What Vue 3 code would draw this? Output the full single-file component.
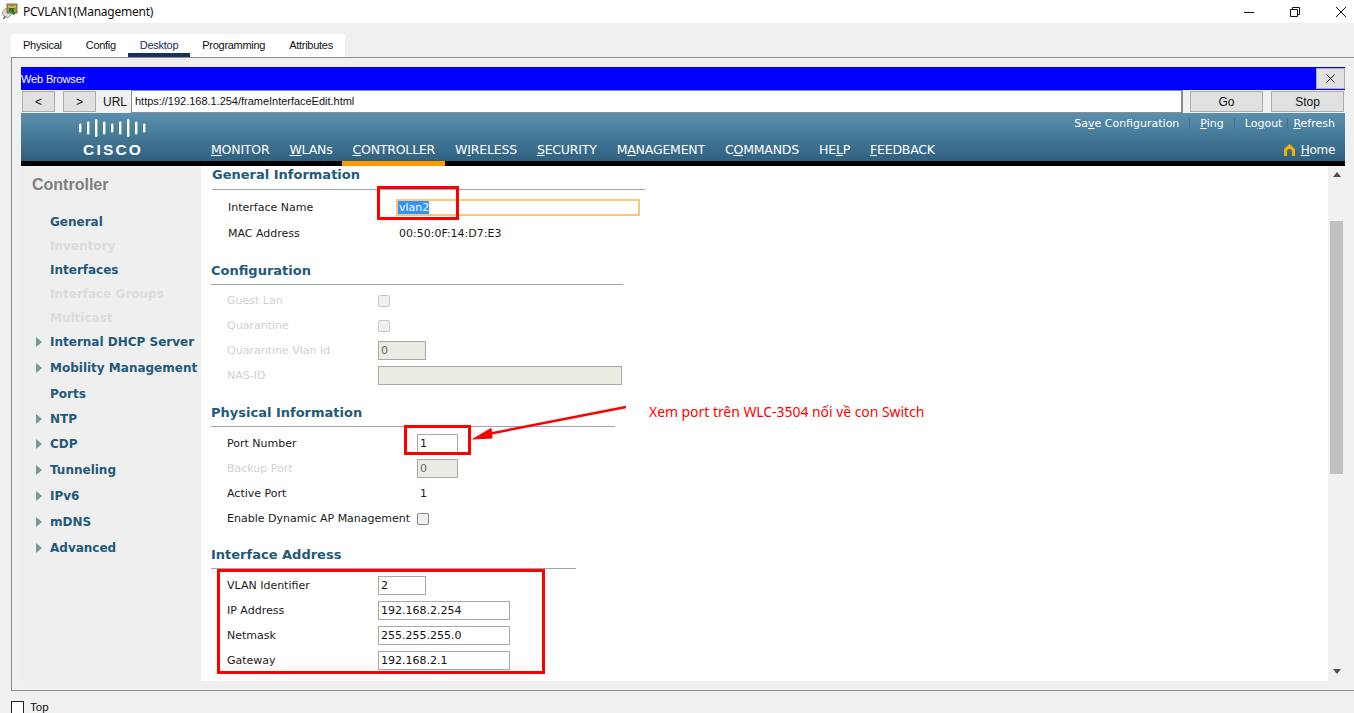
<script setup>
const tabs = ['Physical', 'Config', 'Desktop', 'Programming', 'Attributes']
const nav = [
  ['', 'M', 'ONITOR'], ['', 'W', 'LANs'], ['', 'C', 'ONTROLLER'], ['W', 'I', 'RELESS'],
  ['', 'S', 'ECURITY'], ['M', 'A', 'NAGEMENT'], ['C', 'O', 'MMANDS'], ['HE', 'L', 'P'], ['', 'F', 'EEDBACK']
]
const side = [
  { t: 'General', h: 24 },
  { t: 'Inventory', h: 24, off: true },
  { t: 'Interfaces', h: 24 },
  { t: 'Interface Groups', h: 24, off: true },
  { t: 'Multicast', h: 24, off: true },
  { t: 'Internal DHCP Server', h: 24, arrow: true },
  { t: 'Mobility Management', h: 28, arrow: true },
  { t: 'Ports', h: 24 },
  { t: 'NTP', h: 25, arrow: true },
  { t: 'CDP', h: 26, arrow: true },
  { t: 'Tunneling', h: 26, arrow: true },
  { t: 'IPv6', h: 26, arrow: true },
  { t: 'mDNS', h: 26, arrow: true },
  { t: 'Advanced', h: 26, arrow: true }
]
const bars = [
  [79, 9], [87, 13], [95, 18], [103, 13], [111, 9], [119, 13], [127, 18], [135, 13], [143, 9]
]
const sections = [
  {
    key: 'general', title: 'General Information',
    rows: [
      { label: 'Interface Name', kind: 'focus', value: 'vlan2' },
      { label: 'MAC Address', kind: 'text', value: '00:50:0F:14:D7:E3' }
    ]
  },
  {
    key: 'config', title: 'Configuration',
    rows: [
      { label: 'Guest Lan', kind: 'check', off: true },
      { label: 'Quarantine', kind: 'check', off: true },
      { label: 'Quarantine Vlan Id', kind: 'input', off: true, value: '0', w: 'w48' },
      { label: 'NAS-ID', kind: 'input', off: true, value: '', w: 'w244' }
    ]
  },
  {
    key: 'physical', title: 'Physical Information',
    rows: [
      { label: 'Port Number', kind: 'input', value: '1', w: 'w41' },
      { label: 'Backup Port', kind: 'input', off: true, value: '0', w: 'w41' },
      { label: 'Active Port', kind: 'text', value: '1' },
      { label: 'Enable Dynamic AP Management', kind: 'check' }
    ]
  },
  {
    key: 'address', title: 'Interface Address',
    rows: [
      { label: 'VLAN Identifier', kind: 'input', value: '2', w: 'w48' },
      { label: 'IP Address', kind: 'input', value: '192.168.2.254', w: 'w132' },
      { label: 'Netmask', kind: 'input', value: '255.255.255.0', w: 'w132' },
      { label: 'Gateway', kind: 'input', value: '192.168.2.1', w: 'w132' }
    ]
  }
]
</script>

<template>
  <div class="app">
    <header class="titlebar">
      <svg class="appicon" width="16" height="17" viewBox="0 0 16 17">
        <ellipse cx="5" cy="10" rx="4.5" ry="4.5" fill="#d8dcd8" stroke="#9aa09a" />
        <rect x="5" y="1" width="10" height="9" fill="#b8923c" stroke="#6f5a20" stroke-width="0.8" />
        <path d="M6 3l4 2 4-2" fill="none" stroke="#e8d48a" />
        <path d="M7 5l6 0-1.5 2 2 4-2.5 1-2-4-2 1.5z" fill="#1e7a33" />
        <path d="M3 13l-1.5 3" stroke="#555" stroke-width="1.4" />
      </svg>
      <span class="wintitle">PCVLAN1(Management)</span>
      <div class="winctl">
        <svg width="12" height="12" viewBox="0 0 12 12"><path d="M1 6.5h10" stroke="#111" fill="none" /></svg>
        <svg width="12" height="12" viewBox="0 0 12 12"><path d="M1.5 3.5h7v7h-7zM3.5 3.5v-2h7v7h-2" stroke="#111" fill="none" /></svg>
        <svg width="12" height="12" viewBox="0 0 12 12"><path d="M1 1l10 10M11 1L1 11" stroke="#111" fill="none" /></svg>
      </div>
    </header>

    <nav class="tabs">
      <span v-for="t in tabs" :key="t" class="tab" :class="{ active: t === 'Desktop' }">{{ t }}</span>
    </nav>

    <section class="panel">
      <div class="bluebar">
        <span>Web Browser</span>
        <button class="btn closebtn">
          <svg width="11" height="11" viewBox="0 0 11 11"><path d="M1.5 1.5l8 8M9.5 1.5l-8 8" stroke="#111" fill="none" /></svg>
        </button>
      </div>
      <div class="urlrow">
        <button class="btn navbtn">&lt;</button>
        <button class="btn navbtn second">&gt;</button>
        <span class="urllabel">URL</span>
        <div class="urlinput">https://192.168.1.254/frameInterfaceEdit.html</div>
        <button class="btn gobtn">Go</button>
        <button class="btn gobtn">Stop</button>
      </div>

      <div class="hdr">
        <div class="logo">
          <svg class="bars" width="70" height="22" viewBox="76 117 70 22">
            <rect v-for="b in bars" :key="b[0]" :x="b[0]" :y="128 - b[1] / 2" width="2.4" :height="b[1]" rx="1.2" fill="#fff" />
          </svg>
          <span class="cisco">CISCO</span>
        </div>
        <div class="hdrmain">
          <div class="toplinks">
            <span>Sa<u>v</u>e Configuration</span><i class="sep"></i>
            <span><u>P</u>ing</span><i class="sep"></i>
            <span>Lo<u>g</u>out</span><i class="sep near"></i>
            <span><u>R</u>efresh</span>
          </div>
          <div class="navrow">
            <div class="navitems">
              <span v-for="n in nav" :key="n[1] + n[2]" class="navitem" :class="{ current: n[2] === 'ONTROLLER' }">{{ n[0] }}<u>{{ n[1] }}</u>{{ n[2] }}</span>
            </div>
            <div class="home">
              <svg width="11" height="12" viewBox="0 0 11 12"><path d="M5.5 0L11 5v7H8V7.5a2.5 2.5 0 0 0-5 0V12H0V5z" fill="#f0b400" /></svg>
              <span><u>H</u>ome</span>
            </div>
          </div>
        </div>
      </div>

      <div class="body">
        <aside class="sidebar">
          <h2 class="sidetitle">Controller</h2>
          <div
            v-for="s in side" :key="s.t" class="sideitem" :class="{ off: s.off }"
            :style="{ height: s.h + 'px' }"
          >
            <i v-if="s.arrow" class="tri"></i>{{ s.t }}
          </div>
        </aside>

        <main class="content">
          <div v-for="sec in sections" :key="sec.key" class="sec" :class="sec.key">
            <h3 class="sechead">{{ sec.title }}</h3>
            <div class="rows">
              <div v-for="r in sec.rows" :key="r.label" class="row" :class="{ off: r.off }">
                <span class="label">{{ r.label }}</span>
                <span v-if="r.kind === 'text'" class="valtext">{{ r.value }}</span>
                <div v-else-if="r.kind === 'focus'" class="focus"><span class="sel">{{ r.value }}</span></div>
                <i v-else-if="r.kind === 'check'" class="check"></i>
                <div v-else class="input" :class="r.w">{{ r.value }}</div>
              </div>
            </div>
          </div>
        </main>

        <div class="scrollbar">
          <i class="up"></i>
          <div class="thumb"></div>
          <i class="down"></i>
        </div>
      </div>
    </section>

    <footer class="foot">
      <i class="footcheck"></i>
      <span>Top</span>
    </footer>

    <div class="redbox box1"></div>
    <div class="redbox box2"></div>
    <div class="redbox box3"></div>
    <svg class="arrow" width="170" height="50" viewBox="465 400 170 50">
      <path d="M626 407L488 434" stroke="#f00" stroke-width="2.4" fill="none" />
      <path d="M473 439L491 428.5L492 438z" fill="#f00" stroke="#f00" />
    </svg>
    <div class="note">Xem port trên WLC-3504 nối về con Switch</div>
  </div>
</template>

<style scoped>
.app {
  position: relative;
  width: 1354px;
  height: 713px;
  overflow: hidden;
  background: #f0f0f0;
  display: flex;
  flex-direction: column;
  font-family: "Noto Sans", "Liberation Sans", sans-serif;
  color: #111;
}
i { display: block; font-style: normal; }

.titlebar {
  height: 23px;
  background: #fff;
  display: flex;
  align-items: center;
  position: relative;
  flex: none;
}
.appicon { margin-left: 2px; flex: none; }
.wintitle { margin-left: 5px; font-size: 12px; line-height: 23px; letter-spacing: -0.25px; }
.winctl {
  margin-left: auto;
  display: flex;
  gap: 34px;
  padding-right: 7px;
}

.tabs {
  flex: none;
  margin: 11px 0 0 11px;
  width: 334px;
  height: 23px;
  background: #fff;
  display: flex;
}
.tab {
  padding: 0 12px;
  font-family: "Liberation Sans", sans-serif;
  font-size: 11px;
  letter-spacing: -0.28px;
  line-height: 23px;
  box-sizing: border-box;
  height: 23px;
}
.tab.active { border-bottom: 4px solid #14315c; color: #14315c; }

.panel {
  flex: none;
  box-sizing: border-box;
  height: 634px;
  margin-left: 11px;
  border: 1px solid #8a8f96;
  border-right: 0;
  padding: 9px 9px 0;
  font-family: "Liberation Sans", sans-serif;
}
.bluebar {
  height: 23px;
  background: #00f;
  color: #fff;
  font-size: 11px;
  letter-spacing: -0.15px;
  display: flex;
  align-items: center;
  justify-content: space-between;
}
.btn {
  box-sizing: border-box;
  border: 1px solid #adadad;
  background: #e1e1e1;
  padding: 0;
  font: 12px "Liberation Sans", sans-serif;
  color: #111;
  display: flex;
  align-items: center;
  justify-content: center;
}
.closebtn { width: 29px; height: 21px; }
.urlrow {
  height: 23px;
  display: flex;
  align-items: center;
}
.navbtn { width: 33px; height: 21px; margin-left: 1px; }
.navbtn.second { margin-left: 8px; }
.urllabel { font-size: 12px; margin-left: 7px; width: 28px; }
.urlinput {
  flex: none;
  box-sizing: border-box;
  width: 1052px;
  height: 23px;
  background: #fff;
  border: 1px solid #8a8a8a;
  border-right-width: 2px;
  padding-left: 3px;
  font-size: 11px;
  letter-spacing: -0.02px;
  line-height: 21px;
}
.gobtn { width: 73px; height: 21px; margin-left: 7px; }
.gobtn:last-child { margin-left: 8px; }

.hdr {
  height: 53px;
  box-sizing: border-box;
  border-bottom: 5px solid #000;
  background: linear-gradient(#5a90ae, #2f6080);
  display: flex;
  color: #fff;
}
.logo {
  flex: none;
  width: 190px;
  box-sizing: border-box;
  padding: 4px 0 0 55px;
}
.bars { display: block; }
.cisco {
  display: block;
  margin: 2px 0 0 7px;
  font: 700 15.5px/17px "Liberation Sans", sans-serif;
  letter-spacing: 2.2px;
}
.hdrmain { flex: 1; display: flex; flex-direction: column; }
.toplinks {
  height: 20px;
  display: flex;
  align-items: center;
  justify-content: flex-end;
  padding-right: 10px;
  font: 11px "DejaVu Sans", sans-serif;
}
.sep { width: 1px; height: 11px; background: #4d6f88; margin: 0 10px; }
.sep.near { margin: 0 5px; }
.navrow {
  height: 28px;
  box-sizing: border-box;
  padding-top: 6px;
  display: flex;
  justify-content: space-between;
  align-items: center;
}
.navitems { display: flex; gap: 20px; font: 12.5px/22px "DejaVu Sans", sans-serif; letter-spacing: -0.2px; }
.navitem { position: relative; }
.navitem.current::after {
  content: "";
  position: absolute;
  left: -10px;
  right: -10px;
  top: 22px;
  height: 5px;
  background: #f90;
}
.home {
  display: flex;
  align-items: center;
  gap: 6px;
  padding-right: 10px;
  font: 12px "DejaVu Sans", sans-serif;
  letter-spacing: -0.3px;
}

.body { height: 515px; display: flex; background: #fff; }
.sidebar {
  flex: none;
  width: 180px;
  background: #efefef;
  box-sizing: border-box;
}
.sidetitle {
  margin: 0;
  height: 44px;
  padding: 10px 0 0 11px;
  box-sizing: border-box;
  font: 700 16px/18px "Liberation Sans", sans-serif;
  color: #7f7f80;
}
.sideitem {
  position: relative;
  padding-left: 29px;
  display: flex;
  align-items: center;
  font: 700 12px "DejaVu Sans", sans-serif;
  color: #1f5a7a;
  white-space: nowrap;
}
.sideitem.off { color: #dcdcdc; }
.tri {
  position: absolute;
  left: 15px;
  width: 0;
  height: 0;
  border-left: 6px solid #6f9c9c;
  border-top: 5.5px solid transparent;
  border-bottom: 5.5px solid transparent;
}

.content { flex: 1; min-width: 0; overflow: hidden; padding-left: 10px; font: 11px "DejaVu Sans", sans-serif; }
.sec { margin-top: 14px; }
.sechead {
  margin: 0;
  padding: 1px 0 3px;
  border-bottom: 1px solid #9aa3b8;
  font: 700 13px/20px "DejaVu Sans", sans-serif;
  color: #1f5a7a;
}
.rows { padding: 4px 0 0 16px; }
.row { height: 25px; display: flex; align-items: center; color: #1a1a1a; }
.row.off { color: #d0d0d0; }
.label { flex: none; white-space: nowrap; }
.general { margin: -2px 0 0 1px; width: 433px; }
.general .sechead { padding-bottom: 4px; }
.general .row { height: 26px; }
.general .label { width: 168px; }
.config { width: 412px; }
.config .rows { padding-top: 3px; }
.config .label, .address .label { width: 151px; }
.physical { width: 404px; }
.physical .label { width: 190px; }
.address { width: 365px; margin-top: 13px; }
.valtext { padding-left: 3px; }
.focus {
  box-sizing: border-box;
  width: 244px;
  height: 17px;
  border: 2px solid #f5c87a;
  padding-left: 0;
  line-height: 13px;
  display: flex;
  align-items: center;
}
.sel { background: #3390ff; color: #fff; padding: 0 0 0 1px; }
.input {
  box-sizing: border-box;
  height: 19px;
  border: 1px solid #a9a9a9;
  background: #fff;
  padding-left: 2px;
  line-height: 17px;
  color: #111;
}
.off .input { background: #ebebe4; color: #666; }
.w41 { width: 41px; }
.w48 { width: 48px; }
.w132 { width: 132px; }
.w244 { width: 244px; }
.check {
  box-sizing: border-box;
  width: 12px;
  height: 12px;
  border: 1px solid #8a8a8a;
  border-radius: 2px;
  background: #f0f0f0;
}
.off .check { border-color: #c8c8c8; }

.scrollbar {
  flex: none;
  width: 17px;
  background: #f0f0f0;
  display: flex;
  flex-direction: column;
  align-items: center;
  position: relative;
}
.up, .down {
  position: absolute;
  width: 0;
  height: 0;
  border-left: 4px solid transparent;
  border-right: 4px solid transparent;
}
.up { top: 6px; border-bottom: 5px solid #505050; }
.down { bottom: 7px; border-top: 5px solid #505050; }
.thumb { margin-top: 55px; width: 13px; height: 253px; background: #c0c0c0; }

.foot {
  flex: none;
  margin: 9px 0 0 11px;
  display: flex;
  align-items: center;
  gap: 6px;
  font: 11.5px "Liberation Sans", sans-serif;
  height: 14px;
}
.footcheck { box-sizing: border-box; width: 13px; height: 13px; border: 1px solid #222; background: #fff; }

.redbox { position: absolute; box-sizing: border-box; border: 3px solid #f00; }
.box1 { left: 377px; top: 186px; width: 82px; height: 34px; }
.box2 { left: 404px; top: 425px; width: 67px; height: 30px; }
.box3 { left: 217px; top: 569px; width: 328px; height: 105px; }
.arrow { position: absolute; left: 465px; top: 400px; }
.note {
  position: absolute;
  left: 649px;
  top: 403px;
  font: 13.9px/18px "Noto Sans", sans-serif;
  color: #f00;
  white-space: nowrap;
}
</style>
